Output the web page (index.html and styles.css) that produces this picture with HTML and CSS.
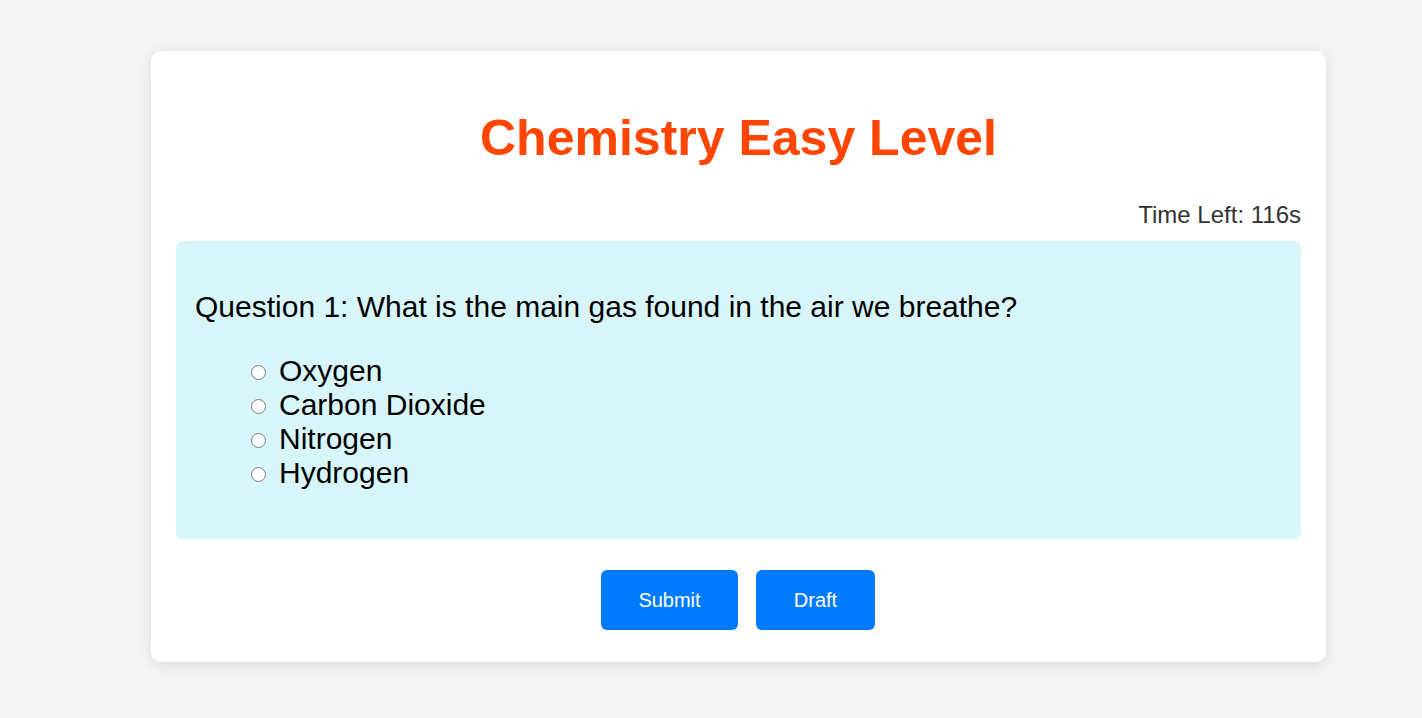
FILE: index.html
```html
<!DOCTYPE html>
<html lang="en">
<head>
<meta charset="utf-8">
<title>Chemistry Easy Level</title>
<link rel="stylesheet" href="styles.css">
</head>
<body>
<div class="page">
  <main class="card">
    <h1 class="title">Chemistry Easy Level</h1>
    <div class="timer">Time Left: 116s</div>
    <section class="question">
      <p class="question-text">Question 1: What is the main gas found in the air we breathe?</p>
      <ul class="options">
        <li class="option"><input type="radio" name="q1" class="radio"><span>Oxygen</span></li>
        <li class="option"><input type="radio" name="q1" class="radio"><span>Carbon Dioxide</span></li>
        <li class="option"><input type="radio" name="q1" class="radio"><span>Nitrogen</span></li>
        <li class="option"><input type="radio" name="q1" class="radio"><span>Hydrogen</span></li>
      </ul>
    </section>
    <div class="actions">
      <button class="btn btn-submit">Submit</button>
      <button class="btn btn-draft">Draft</button>
    </div>
  </main>
</div>
</body>
</html>
```

FILE: styles.css
```css
html, body {
  margin: 0;
  padding: 0;
  background: #f4f4f4;
  font-family: "Liberation Sans", Arial, sans-serif;
}

.page {
  padding: 51px 0 0 151px;
  min-height: 718px;
  box-sizing: border-box;
}

.card {
  width: 1175px;
  box-sizing: border-box;
  background: #fff;
  border-radius: 10px;
  box-shadow: 0 3px 14px rgba(0, 0, 0, 0.1);
  padding: 25px 25px 32px;
  display: flex;
  flex-direction: column;
}

.title {
  margin: 33px 0 34px;
  text-align: center;
  font-size: 50px;
  line-height: 58px;
  font-weight: bold;
  color: #ff4500;
}

.timer {
  text-align: right;
  font-size: 24px;
  line-height: 28px;
  color: #333;
  margin-bottom: 12px;
}

.question {
  background: #d8f6fa;
  border-radius: 6px;
  padding: 19px 19px 16px;
  height: 298px;
  box-sizing: border-box;
}

.question-text {
  margin: 30px 0 29px;
  font-size: 30px;
  line-height: 34.5px;
  color: #000;
}

.options {
  list-style: none;
  margin: 0;
  padding: 0 0 0 56px;
}

.option {
  display: flex;
  align-items: center;
  height: 34px;
  font-size: 30px;
  color: #000;
}

.radio {
  appearance: none;
  -webkit-appearance: none;
  width: 15px;
  height: 15px;
  margin: 3px 13px 0 0;
  border: 1px solid #7a7a7a;
  border-radius: 50%;
  background: #fff;
  box-sizing: border-box;
  flex: none;
}

.actions {
  display: flex;
  justify-content: center;
  gap: 18px;
  margin-top: 31px;
  padding-right: 1px;
}

.btn {
  height: 60px;
  border: none;
  border-radius: 6px;
  background: #007bff;
  color: #fff;
  font-family: "Liberation Sans", Arial, sans-serif;
  font-size: 20px;
  padding: 0;
  cursor: pointer;
}

.btn-submit {
  width: 137px;
}

.btn-draft {
  width: 119px;
}
```
